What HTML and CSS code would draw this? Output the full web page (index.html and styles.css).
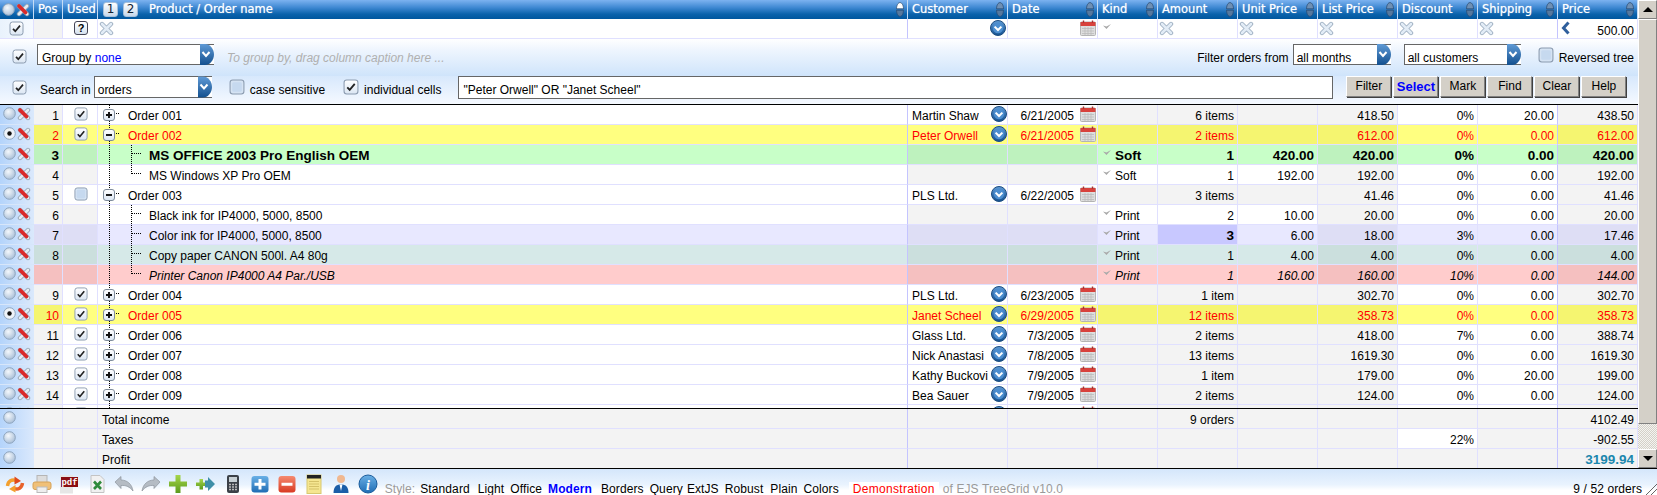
FILE: index.html
```html
<!DOCTYPE html>
<html lang="en">
<head>
<meta charset="utf-8">
<title>TreeGrid</title>
<link rel="stylesheet" href="styles.css">
</head>
<body>
<svg class="sprite" xmlns="http://www.w3.org/2000/svg">
  <defs>
    <radialGradient id="rg" cx=".4" cy=".35" r=".7"><stop offset="0" stop-color="#f4f8fc"/><stop offset="1" stop-color="#a7bdd6"/></radialGradient>
    <linearGradient id="cg" x1="0" y1="0" x2="0" y2="1"><stop offset="0" stop-color="#fff"/><stop offset="1" stop-color="#dbe6f3"/></linearGradient>
    <linearGradient id="bg" x1="0" y1="0" x2="0" y2="1"><stop offset="0" stop-color="#5f9ad6"/><stop offset="1" stop-color="#13508f"/></linearGradient>
    <linearGradient id="gg" x1="0" y1="0" x2="0" y2="1"><stop offset="0" stop-color="#a5d64a"/><stop offset="1" stop-color="#5c9a1c"/></linearGradient>
    <linearGradient id="rd" x1="0" y1="0" x2="0" y2="1"><stop offset="0" stop-color="#f58a70"/><stop offset="1" stop-color="#d93a22"/></linearGradient>
    <linearGradient id="pb" x1="0" y1="0" x2="0" y2="1"><stop offset="0" stop-color="#6ab0e6"/><stop offset="1" stop-color="#1f6db4"/></linearGradient>
  </defs>
  <symbol id="radio" viewBox="0 0 13 13"><circle cx="6.5" cy="6.5" r="5.8" fill="url(#rg)" stroke="#8ea4bc"/></symbol>
  <symbol id="radio-on" viewBox="0 0 13 13"><circle cx="6.5" cy="6.5" r="5.8" fill="#eef3f8" stroke="#8ea4bc"/><circle cx="6.5" cy="6.5" r="2.2" fill="#111"/></symbol>
  <symbol id="del" viewBox="0 0 14 14"><path d="M3 3 11 11M11 3 3 11" stroke="#97a6b6" stroke-width="4.4" stroke-linecap="round"/><path d="M3 3 11 11M11 3 3 11" stroke="#e4ebf2" stroke-width="2.6" stroke-linecap="round"/><path d="M3 3 9.500 9.500" stroke="#d92a2a" stroke-width="3.8" stroke-linecap="round"/></symbol>
  <symbol id="chk" viewBox="0 0 15 15"><rect x="1" y="1" width="13" height="13" rx="2.5" fill="url(#cg)" stroke="#8c9cb0"/><path d="M4 7.8 6.3 10.2 11 4.6" fill="none" stroke="#222" stroke-width="1.7"/></symbol>
  <symbol id="off" viewBox="0 0 15 15"><rect x="1" y="1" width="13" height="13" rx="2.5" fill="#d5e3f3" stroke="#8c9cb0"/><rect x="3" y="3" width="9" height="9" rx="1.5" fill="#c6d9ef"/></symbol>
  <symbol id="x" viewBox="0 0 15 15"><path d="M3 3 12 12M12 3 3 12" stroke="#9fb0c2" stroke-width="4.4" stroke-linecap="round"/><path d="M3 3 12 12M12 3 3 12" stroke="#e2ecf6" stroke-width="2.6" stroke-linecap="round"/></symbol>
  <symbol id="drop" viewBox="0 0 16 16"><circle cx="8" cy="8" r="7.5" fill="url(#bg)" stroke="#1d4d80"/><circle cx="8" cy="8" r="5.2" fill="#4d8ecf"/><path d="M4.6 6.6 8 10 11.4 6.6" fill="none" stroke="#fff" stroke-width="2"/></symbol>
  <symbol id="cal" viewBox="0 0 16 16"><rect x=".5" y="2" width="15" height="13.5" rx="1" fill="#dedede" stroke="#b4b4b4"/><rect x=".5" y="2" width="15" height="4" fill="#d8423c"/><path d="M3.5 .5V3M12.5 .5V3" stroke="#a33" stroke-width="1.4"/><path d="M2 8.5H14M2 11H14M2 13.5H14M5 7V15M8 7V15M11 7V15" stroke="#bbb" stroke-width=".8"/></symbol>
  <symbol id="kind" viewBox="0 0 10 8"><path d="M1 2.5 4.500 6 9 1 4.500 3.500Z" fill="#a9a9a9"/></symbol>
  <symbol id="plus" viewBox="0 0 12 12"><rect x=".5" y=".5" width="11" height="11" rx="2.5" fill="url(#cg)" stroke="#7f8c9c"/><path d="M3 6H9M6 3V9" stroke="#111" stroke-width="1.9"/></symbol>
  <symbol id="minus" viewBox="0 0 12 12"><rect x=".5" y=".5" width="11" height="11" rx="2.5" fill="url(#cg)" stroke="#7f8c9c"/><path d="M3 6H9" stroke="#111" stroke-width="1.9"/></symbol>
  <symbol id="sort" viewBox="0 0 8 15"><path d="M4 .6C6 .6 7.500 3.500 7.500 6.800H.5C.5 3.500 2 .6 4 .6Z" fill="#6f90b4" stroke="#2a4c74" stroke-width=".8"/><path d="M4 14.400C6 14.400 7.500 11.500 7.500 8.200H.5C.5 11.500 2 14.400 4 14.400Z" fill="#56799f" stroke="#2a4c74" stroke-width=".8"/></symbol>
  <symbol id="sort-up" viewBox="0 0 8 15"><path d="M4 .6C6 .6 7.500 3.500 7.500 6.800H.5C.5 3.500 2 .6 4 .6Z" fill="#fff" stroke="#2a4c74" stroke-width=".8"/><path d="M4 14.400C6 14.400 7.500 11.500 7.500 8.200H.5C.5 11.500 2 14.400 4 14.400Z" fill="#56799f" stroke="#2a4c74" stroke-width=".8"/></symbol>
  <symbol id="left" viewBox="0 0 10 14"><path d="M7.500 1.500 2.500 7 7.500 12.500" fill="none" stroke="#2f5f9c" stroke-width="3"/></symbol>
  <symbol id="dd" viewBox="0 0 14 21"><path d="M0 0H5C10 0 14 5 14 10.500S10 21 5 21H0Z" fill="url(#bg)"/><path d="M2.500 8 6 12 9.500 8" fill="none" stroke="#fff" stroke-width="2"/></symbol>
</svg>

<div class="sheet">
  <div class="main">
    <div class="row head">
      <div class="hc lead"><svg class="ic13"><use href="#radio"/></svg><svg class="ic14"><use href="#del"/></svg></div>
      <div class="hc">Pos</div>
      <div class="hc">Used</div>
      <div class="hc namehead"><span class="lvl">1</span><span class="lvl">2</span><span class="htext pt">Product / Order name</span><svg class="sort"><use href="#sort-up"/></svg></div>
      <div class="hc"><span class="htext">Customer</span><svg class="sort"><use href="#sort"/></svg></div>
      <div class="hc"><span class="htext">Date</span><svg class="sort"><use href="#sort"/></svg></div>
      <div class="hc"><span class="htext">Kind</span><svg class="sort"><use href="#sort"/></svg></div>
      <div class="hc"><span class="htext">Amount</span><svg class="sort"><use href="#sort"/></svg></div>
      <div class="hc"><span class="htext">Unit Price</span><svg class="sort"><use href="#sort"/></svg></div>
      <div class="hc"><span class="htext">List Price</span><svg class="sort"><use href="#sort"/></svg></div>
      <div class="hc"><span class="htext">Discount</span><svg class="sort"><use href="#sort"/></svg></div>
      <div class="hc"><span class="htext">Shipping</span><svg class="sort"><use href="#sort"/></svg></div>
      <div class="hc"><span class="htext">Price</span><svg class="sort"><use href="#sort"/></svg></div>
    </div>

    <div class="row">
      <div class="c fl-lead"><svg class="ic15"><use href="#chk"/></svg></div>
      <div class="c g"></div>
      <div class="c ctr"><span class="q">?</span></div>
      <div class="c fx sl"><svg class="ic15"><use href="#x"/></svg></div>
      <div class="c ico"><span class="grow"></span><svg class="ic16"><use href="#drop"/></svg></div>
      <div class="c ico"><span class="grow"></span><svg class="ic16"><use href="#cal"/></svg></div>
      <div class="c kind"><svg class="kd"><use href="#kind"/></svg></div>
      <div class="c fx"><svg class="ic15"><use href="#x"/></svg></div>
      <div class="c fx"><svg class="ic15"><use href="#x"/></svg></div>
      <div class="c fx"><svg class="ic15"><use href="#x"/></svg></div>
      <div class="c fx"><svg class="ic15"><use href="#x"/></svg></div>
      <div class="c fx sl"><svg class="ic15"><use href="#x"/></svg></div>
      <div class="c fx"><svg class="lf"><use href="#left"/></svg><span class="grow rt">500.00</span></div>
    </div>

    <div class="group">
      <svg class="ic15 pchk"><use href="#chk"/></svg>
      <div class="sel w-group"><span>Group by <b class="blue">none</b></span><svg class="ddb"><use href="#dd"/></svg></div>
      <span class="hint">To group by, drag column caption here ...</span>
      <span class="grow"></span>
      <span>Filter orders from</span>
      <div class="sel w-month"><span>all months</span><svg class="ddb"><use href="#dd"/></svg></div>
      <div class="sel w-cust"><span>all customers</span><svg class="ddb"><use href="#dd"/></svg></div>
      <svg class="ic16 rev"><use href="#off"/></svg>
      <span class="revt">Reversed tree</span>
    </div>

    <div class="search">
      <svg class="ic15 pchk"><use href="#chk"/></svg>
      <span class="sl-lab">Search in</span>
      <div class="sel w-search"><span>orders</span><svg class="ddb"><use href="#dd"/></svg></div>
      <svg class="ic16 cs"><use href="#off"/></svg>
      <span>case sensitive</span>
      <svg class="ic16 ind"><use href="#chk"/></svg>
      <span>individual cells</span>
      <div class="query">"Peter Orwell" OR "Janet Scheel"</div>
      <div class="btns">
        <b class="btn">Filter</b><b class="btn sel-b">Select</b><b class="btn">Mark</b><b class="btn">Find</b><b class="btn">Clear</b><b class="btn">Help</b>
      </div>
    </div>

    <div class="body">
      <div class="row">
        <div class="c lp"><svg class="ic13"><use href="#radio"/></svg><svg class="ic14"><use href="#del"/></svg></div>
        <div class="c g">1</div><div class="c ctr"><svg class="ic13"><use href="#chk"/></svg></div>
        <div class="c nm sl"><svg class="node"><use href="#plus"/></svg><i class="h oh"></i><span class="ot">Order 001</span></div>
        <div class="c cu"><span class="grow">Martin Shaw</span><svg class="ic16"><use href="#drop"/></svg></div>
        <div class="c da"><span class="grow">6/21/2005</span><svg class="ic16"><use href="#cal"/></svg></div>
        <div class="c g"></div><div class="c g">6 items</div><div class="c g"></div><div class="c g">418.50</div><div class="c">0%</div><div class="c sl">20.00</div><div class="c g">438.50</div>
      </div>
      <div class="row yellow">
        <div class="c lp"><svg class="ic13"><use href="#radio-on"/></svg><svg class="ic14"><use href="#del"/></svg></div>
        <div class="c g">2</div><div class="c ctr"><svg class="ic13"><use href="#chk"/></svg></div>
        <div class="c nm sl"><svg class="node"><use href="#minus"/></svg><i class="h oh"></i><span class="ot">Order 002</span></div>
        <div class="c cu"><span class="grow">Peter Orwell</span><svg class="ic16"><use href="#drop"/></svg></div>
        <div class="c da"><span class="grow">6/21/2005</span><svg class="ic16"><use href="#cal"/></svg></div>
        <div class="c g"></div><div class="c g">2 items</div><div class="c g"></div><div class="c g">612.00</div><div class="c">0%</div><div class="c sl">0.00</div><div class="c g">612.00</div>
      </div>
      <div class="row green bold">
        <div class="c lp"><svg class="ic13"><use href="#radio"/></svg><svg class="ic14"><use href="#del"/></svg></div>
        <div class="c g">3</div><div class="c g"></div>
        <div class="c nm sl"><i class="v"></i><i class="h ch"></i><span class="ct">MS OFFICE 2003 Pro English OEM</span></div>
        <div class="c g"></div><div class="c g"></div>
        <div class="c kind"><svg class="kd"><use href="#kind"/></svg><span>Soft</span></div>
        <div class="c">1</div><div class="c">420.00</div><div class="c g">420.00</div><div class="c">0%</div><div class="c sl">0.00</div><div class="c g">420.00</div>
      </div>
      <div class="row">
        <div class="c lp"><svg class="ic13"><use href="#radio"/></svg><svg class="ic14"><use href="#del"/></svg></div>
        <div class="c g">4</div><div class="c g"></div>
        <div class="c nm sl"><i class="v last"></i><i class="h ch"></i><span class="ct">MS Windows XP Pro OEM</span></div>
        <div class="c g"></div><div class="c g"></div>
        <div class="c kind"><svg class="kd"><use href="#kind"/></svg><span>Soft</span></div>
        <div class="c">1</div><div class="c">192.00</div><div class="c g">192.00</div><div class="c">0%</div><div class="c sl">0.00</div><div class="c g">192.00</div>
      </div>
      <div class="row">
        <div class="c lp"><svg class="ic13"><use href="#radio"/></svg><svg class="ic14"><use href="#del"/></svg></div>
        <div class="c g">5</div><div class="c ctr"><svg class="ic13"><use href="#off"/></svg></div>
        <div class="c nm sl"><svg class="node"><use href="#minus"/></svg><i class="h oh"></i><span class="ot">Order 003</span></div>
        <div class="c cu"><span class="grow">PLS Ltd.</span><svg class="ic16"><use href="#drop"/></svg></div>
        <div class="c da"><span class="grow">6/22/2005</span><svg class="ic16"><use href="#cal"/></svg></div>
        <div class="c g"></div><div class="c g">3 items</div><div class="c g"></div><div class="c g">41.46</div><div class="c">0%</div><div class="c sl">0.00</div><div class="c g">41.46</div>
      </div>
      <div class="row">
        <div class="c lp"><svg class="ic13"><use href="#radio"/></svg><svg class="ic14"><use href="#del"/></svg></div>
        <div class="c g">6</div><div class="c g"></div>
        <div class="c nm sl"><i class="v"></i><i class="h ch"></i><span class="ct">Black ink for IP4000, 5000, 8500</span></div>
        <div class="c g"></div><div class="c g"></div>
        <div class="c kind"><svg class="kd"><use href="#kind"/></svg><span>Print</span></div>
        <div class="c">2</div><div class="c">10.00</div><div class="c g">20.00</div><div class="c">0%</div><div class="c sl">0.00</div><div class="c g">20.00</div>
      </div>
      <div class="row lilac">
        <div class="c lp"><svg class="ic13"><use href="#radio"/></svg><svg class="ic14"><use href="#del"/></svg></div>
        <div class="c g">7</div><div class="c g"></div>
        <div class="c nm sl"><i class="v"></i><i class="h ch"></i><span class="ct">Color ink for IP4000, 5000, 8500</span></div>
        <div class="c g"></div><div class="c g"></div>
        <div class="c kind"><svg class="kd"><use href="#kind"/></svg><span>Print</span></div>
        <div class="c focus">3</div><div class="c">6.00</div><div class="c g">18.00</div><div class="c">3%</div><div class="c sl">0.00</div><div class="c g">17.46</div>
      </div>
      <div class="row teal">
        <div class="c lp"><svg class="ic13"><use href="#radio"/></svg><svg class="ic14"><use href="#del"/></svg></div>
        <div class="c g">8</div><div class="c g"></div>
        <div class="c nm sl"><i class="v"></i><i class="h ch"></i><span class="ct">Copy paper CANON 500l. A4 80g</span></div>
        <div class="c g"></div><div class="c g"></div>
        <div class="c kind"><svg class="kd"><use href="#kind"/></svg><span>Print</span></div>
        <div class="c">1</div><div class="c">4.00</div><div class="c g">4.00</div><div class="c">0%</div><div class="c sl">0.00</div><div class="c g">4.00</div>
      </div>
      <div class="row pink">
        <div class="c lp"><svg class="ic13"><use href="#radio"/></svg><svg class="ic14"><use href="#del"/></svg></div>
        <div class="c g"></div><div class="c g"></div>
        <div class="c nm sl"><i class="v last"></i><i class="h ch"></i><span class="ct">Printer Canon IP4000 A4 Par./USB</span></div>
        <div class="c g"></div><div class="c g"></div>
        <div class="c kind"><svg class="kd"><use href="#kind"/></svg><span>Print</span></div>
        <div class="c">1</div><div class="c">160.00</div><div class="c g">160.00</div><div class="c">10%</div><div class="c sl">0.00</div><div class="c g">144.00</div>
      </div>
      <div class="row">
        <div class="c lp"><svg class="ic13"><use href="#radio"/></svg><svg class="ic14"><use href="#del"/></svg></div>
        <div class="c g">9</div><div class="c ctr"><svg class="ic13"><use href="#chk"/></svg></div>
        <div class="c nm sl"><svg class="node"><use href="#plus"/></svg><i class="h oh"></i><span class="ot">Order 004</span></div>
        <div class="c cu"><span class="grow">PLS Ltd.</span><svg class="ic16"><use href="#drop"/></svg></div>
        <div class="c da"><span class="grow">6/23/2005</span><svg class="ic16"><use href="#cal"/></svg></div>
        <div class="c g"></div><div class="c g">1 item</div><div class="c g"></div><div class="c g">302.70</div><div class="c">0%</div><div class="c sl">0.00</div><div class="c g">302.70</div>
      </div>
      <div class="row yellow">
        <div class="c lp"><svg class="ic13"><use href="#radio-on"/></svg><svg class="ic14"><use href="#del"/></svg></div>
        <div class="c g">10</div><div class="c ctr"><svg class="ic13"><use href="#chk"/></svg></div>
        <div class="c nm sl"><svg class="node"><use href="#plus"/></svg><i class="h oh"></i><span class="ot">Order 005</span></div>
        <div class="c cu"><span class="grow">Janet Scheel</span><svg class="ic16"><use href="#drop"/></svg></div>
        <div class="c da"><span class="grow">6/29/2005</span><svg class="ic16"><use href="#cal"/></svg></div>
        <div class="c g"></div><div class="c g">12 items</div><div class="c g"></div><div class="c g">358.73</div><div class="c">0%</div><div class="c sl">0.00</div><div class="c g">358.73</div>
      </div>
      <div class="row">
        <div class="c lp"><svg class="ic13"><use href="#radio"/></svg><svg class="ic14"><use href="#del"/></svg></div>
        <div class="c g">11</div><div class="c ctr"><svg class="ic13"><use href="#chk"/></svg></div>
        <div class="c nm sl"><svg class="node"><use href="#plus"/></svg><i class="h oh"></i><span class="ot">Order 006</span></div>
        <div class="c cu"><span class="grow">Glass Ltd.</span><svg class="ic16"><use href="#drop"/></svg></div>
        <div class="c da"><span class="grow">7/3/2005</span><svg class="ic16"><use href="#cal"/></svg></div>
        <div class="c g"></div><div class="c g">2 items</div><div class="c g"></div><div class="c g">418.00</div><div class="c">7%</div><div class="c sl">0.00</div><div class="c g">388.74</div>
      </div>
      <div class="row">
        <div class="c lp"><svg class="ic13"><use href="#radio"/></svg><svg class="ic14"><use href="#del"/></svg></div>
        <div class="c g">12</div><div class="c ctr"><svg class="ic13"><use href="#chk"/></svg></div>
        <div class="c nm sl"><svg class="node"><use href="#plus"/></svg><i class="h oh"></i><span class="ot">Order 007</span></div>
        <div class="c cu"><span class="grow">Nick Anastasi</span><svg class="ic16"><use href="#drop"/></svg></div>
        <div class="c da"><span class="grow">7/8/2005</span><svg class="ic16"><use href="#cal"/></svg></div>
        <div class="c g"></div><div class="c g">13 items</div><div class="c g"></div><div class="c g">1619.30</div><div class="c">0%</div><div class="c sl">0.00</div><div class="c g">1619.30</div>
      </div>
      <div class="row">
        <div class="c lp"><svg class="ic13"><use href="#radio"/></svg><svg class="ic14"><use href="#del"/></svg></div>
        <div class="c g">13</div><div class="c ctr"><svg class="ic13"><use href="#chk"/></svg></div>
        <div class="c nm sl"><svg class="node"><use href="#plus"/></svg><i class="h oh"></i><span class="ot">Order 008</span></div>
        <div class="c cu"><span class="grow">Kathy Buckovi</span><svg class="ic16"><use href="#drop"/></svg></div>
        <div class="c da"><span class="grow">7/9/2005</span><svg class="ic16"><use href="#cal"/></svg></div>
        <div class="c g"></div><div class="c g">1 item</div><div class="c g"></div><div class="c g">179.00</div><div class="c">0%</div><div class="c sl">20.00</div><div class="c g">199.00</div>
      </div>
      <div class="row">
        <div class="c lp"><svg class="ic13"><use href="#radio"/></svg><svg class="ic14"><use href="#del"/></svg></div>
        <div class="c g">14</div><div class="c ctr"><svg class="ic13"><use href="#chk"/></svg></div>
        <div class="c nm sl"><svg class="node"><use href="#plus"/></svg><i class="h oh"></i><span class="ot">Order 009</span></div>
        <div class="c cu"><span class="grow">Bea Sauer</span><svg class="ic16"><use href="#drop"/></svg></div>
        <div class="c da"><span class="grow">7/9/2005</span><svg class="ic16"><use href="#cal"/></svg></div>
        <div class="c g"></div><div class="c g">2 items</div><div class="c g"></div><div class="c g">124.00</div><div class="c">0%</div><div class="c sl">0.00</div><div class="c g">124.00</div>
      </div>
      <div class="row">
        <div class="c lp"><svg class="ic13"><use href="#radio"/></svg><svg class="ic14"><use href="#del"/></svg></div>
        <div class="c g"></div><div class="c ctr"><svg class="ic13"><use href="#chk"/></svg></div>
        <div class="c nm sl"><svg class="node"><use href="#plus"/></svg></div>
        <div class="c cu"><span class="grow"></span><svg class="ic16"><use href="#drop"/></svg></div>
        <div class="c da"><span class="grow"></span><svg class="ic16"><use href="#cal"/></svg></div>
        <div class="c g"></div><div class="c g"></div><div class="c g"></div><div class="c g"></div><div class="c"></div><div class="c sl"></div><div class="c g"></div>
      </div>
    </div>

    <div class="foot">
      <div class="row fr">
        <div class="c lp"><svg class="ic13"><use href="#radio"/></svg></div>
        <div class="c g"></div><div class="c g"></div><div class="c g lab sl">Total income</div><div class="c g"></div><div class="c g"></div><div class="c g"></div>
        <div class="c g">9 orders</div><div class="c g"></div><div class="c g"></div><div class="c g"></div><div class="c g sl"></div><div class="c g">4102.49</div>
      </div>
      <div class="row fr">
        <div class="c lp"><svg class="ic13"><use href="#radio"/></svg></div>
        <div class="c g"></div><div class="c g"></div><div class="c g lab sl">Taxes</div><div class="c g"></div><div class="c g"></div><div class="c g"></div>
        <div class="c g"></div><div class="c g"></div><div class="c g"></div><div class="c">22%</div><div class="c g sl"></div><div class="c g">-902.55</div>
      </div>
      <div class="row fr short">
        <div class="c lp"><svg class="ic13"><use href="#radio"/></svg></div>
        <div class="c g"></div><div class="c g"></div><div class="c g lab sl">Profit</div><div class="c g"></div><div class="c g"></div><div class="c g"></div>
        <div class="c g"></div><div class="c g"></div><div class="c g"></div><div class="c g"></div><div class="c g sl"></div><div class="c g profit">3199.94</div>
      </div>
    </div>
  </div>

  <div class="scroll">
    <div class="sb-btn"><span class="tri-up"></span></div>
    <div class="sb-thumb"></div>
    <div class="sb-track"></div>
    <div class="sb-btn"><span class="tri-down"></span></div>
  </div>
</div>

<div class="tools">
  <svg class="tb" viewBox="0 0 20 20"><path d="M2.500 12C3 7 7 5 11 6.500" fill="none" stroke="#f3a02e" stroke-width="3.400"/><path d="M9.500 2.500 16 7 9.500 10.500Z" fill="#df4a1e"/><path d="M17.500 9C17 14 13 16 9 14.500" fill="none" stroke="#e8622a" stroke-width="3.400"/><path d="M10.500 11 4 15 10.500 18.500Z" fill="#f3a02e"/></svg>
  <svg class="tb" viewBox="0 0 20 20"><rect x="5" y="1.500" width="10" height="7" fill="#ddd" stroke="#b5b5b5"/><rect x="1" y="8" width="18" height="7.500" rx="2" fill="#f0c078" stroke="#d6a258"/><rect x="5" y="13" width="10" height="5.500" fill="#eee" stroke="#bbb"/></svg>
  <svg class="tb" viewBox="0 0 20 20"><rect x="1" y="1" width="13" height="18.500" fill="#e6e6e6"/><rect x="2" y="3" width="17" height="10" fill="#8a0d12"/><text x="10.500" y="11" class="pdf">pdf</text></svg>
  <svg class="tb" viewBox="0 0 20 20"><path d="M4 1.500H13L17 5.500V18.500H4Z" fill="#f1f1f1" stroke="#c4c4c4"/><path d="M7 7.500 14 15M14 7.500 7 15" stroke="#2f8a3a" stroke-width="2.600"/></svg>
  <svg class="tb" viewBox="0 0 20 20"><path d="M1 8 7 2.500V6C13 6 18 10 19 17 16 13 12 11 7 11.500V14.500Z" fill="#b5bcc4" stroke="#8c949c" stroke-width=".7"/></svg>
  <svg class="tb" viewBox="0 0 20 20"><path d="M19 8 13 2.500V6C7 6 2 10 1 17 4 13 8 11 13 11.500V14.500Z" fill="#b5bcc4" stroke="#8c949c" stroke-width=".7"/></svg>
  <svg class="tb" viewBox="0 0 20 20"><path d="M7.500 1H12.500V7.500H19V12.500H12.500V19H7.500V12.500H1V7.500H7.500Z" fill="url(#gg)"/></svg>
  <svg class="tb" viewBox="0 0 20 20"><path d="M4.500 5H8V8.500H11V12H8V15.500H4.500V12H1V8.500H4.500Z" fill="url(#gg)"/><path d="M10 6.500H13V3L20 10 13 17V13.500H10Z" fill="#3f8fa8"/></svg>
  <svg class="tb" viewBox="0 0 20 20"><rect x="4" y="1" width="12" height="18" rx="2" fill="#3c4148"/><rect x="6" y="3" width="8" height="5" fill="#c8d0d4"/><path d="M6 10.500H14M6 13H14M6 15.500H14" stroke="#bbb" stroke-width="1.300" stroke-dasharray="2 1"/></svg>
  <svg class="tb" viewBox="0 0 20 20"><rect x="1.500" y="2" width="17" height="16.500" rx="3" fill="url(#pb)"/><path d="M4.500 10.250H15.500M10 5V15.500" stroke="#fff" stroke-width="3"/></svg>
  <svg class="tb" viewBox="0 0 20 20"><rect x="1.500" y="2" width="17" height="16.500" rx="3" fill="url(#rd)"/><path d="M4.500 10.250H15.500" stroke="#fff" stroke-width="3"/></svg>
  <svg class="tb" viewBox="0 0 20 20"><rect x="3" y="1" width="14" height="18.500" fill="#f5e690" stroke="#d8c870"/><rect x="3" y="1" width="14" height="3.500" fill="#222"/><path d="M5 7.500H15M5 10H15M5 12.500H15M5 15H15" stroke="#cdb960" stroke-width=".8"/></svg>
  <svg class="tb" viewBox="0 0 20 20"><circle cx="10" cy="5" r="4" fill="#f0b890"/><path d="M2.500 19C2.500 13 5 10.500 10 10.500S17.500 13 17.500 19Z" fill="#1b5ea8"/><path d="M8.500 10.500H11.500L10 17Z" fill="#fff"/></svg>
  <svg class="tb" viewBox="0 0 20 20"><circle cx="10" cy="10" r="9" fill="url(#pb)" stroke="#1a5c9c"/><text x="10" y="15.500" class="inf">i</text></svg>
  <span class="tx st">Style:</span>
  <span class="tx s-std">Standard</span><span class="tx">Light</span><span class="tx">Office</span><span class="tx mod">Modern</span><span class="tx">Borders</span><span class="tx s-query">Query</span><span class="tx">ExtJS</span><span class="tx s-rob">Robust</span><span class="tx">Plain</span><span class="tx">Colors</span>
  <span class="tx demo">Demonstration</span>
  <span class="tx st ofe">of EJS TreeGrid v10.0</span>
  <span class="grow"></span>
  <span class="tx stat">9 / 52 orders</span>
  <svg class="grip" viewBox="0 0 12 12"><path d="M1 12 12 1M6 12 12 6" stroke="#666" fill="none"/></svg>
</div>
</body>
</html>
```

FILE: styles.css
```css
html, body {
  margin: 0;
  padding: 0;
  height: 495px;
  overflow: hidden;
  background: #fff;
  font: 12px/14px "Liberation Sans", Arial, sans-serif;
  color: #000;
}
.sprite { display: block; width: 0; height: 0; overflow: hidden; }
.grow { flex: 1 1 auto; min-width: 0; overflow: hidden; }
.rt { text-align: right; }
.blue { color: #00f; font-weight: normal; }

.sheet {
  display: flex;
  width: 1657px;
  height: 469px;
  box-sizing: border-box;
  border-bottom: 1px solid #000;
}
.main { width: 1638px; display: flex; flex-direction: column; }

.row {
  display: grid;
  grid-template-columns: 34px 29px 35px 810px 100px 90px 60px 80px 80px 80px 80px 80px 80px;
  height: 20px;
  --bg: #fff;
  --alt: #f3f3f3;
}
.c {
  box-sizing: border-box;
  height: 20px;
  padding: 0 3px 0 2px;
  border-right: 1px solid #e0e0ff;
  border-bottom: 1px solid #e0e0ff;
  background-color: var(--bg);
  line-height: 22px;
  text-align: right;
  white-space: nowrap;
  overflow: hidden;
}
.g { background-color: var(--alt); }
.sl { border-right-color: #c4c4ff; }
.yellow { --bg: #ffff80; --alt: #f5f570; color: #f00; }
.green { --bg: #c8ffc8; --alt: #bef2be; }
.lilac { --bg: #e8e8ff; --alt: #dedef5; }
.teal { --bg: #d6e9e8; --alt: #cbdfdd; }
.pink { --bg: #ffcccc; --alt: #f5c0c0; font-style: italic; }
.bold .c { font-weight: bold; font-size: 13.5px; }
.focus { background-color: #c8c8ff; font-weight: bold; font-size: 13.5px; }

/* header */
.head { height: 19px; background: linear-gradient(#7cb2f0 0, #3e88d2 40%, #0a62ab 75%, #00569e 100%); }
.hc {
  display: flex;
  align-items: center;
  box-sizing: border-box;
  padding: 0 3px 1px 4px;
  border-right: 1px solid #c5dcf5;
  color: #fff;
  font: 11.5px/18px "DejaVu Sans", sans-serif;
  text-shadow: 0 0 1px rgba(255, 255, 255, .7);
  white-space: nowrap;
}
.htext { flex: 1 1 auto; }
.pt { margin-left: 6px; }
.lead { padding: 0 0 0 2px; gap: 1px; }
.sort { width: 8px; height: 15px; flex: none; }
.lvl {
  box-sizing: border-box;
  width: 15px;
  height: 15px;
  margin-right: 5px;
  border: 1px solid #a6c0dc;
  border-radius: 3px;
  background: linear-gradient(#fff, #c7d8ea);
  color: #123;
  font: 12px/13px "DejaVu Sans", sans-serif;
  text-shadow: none;
  text-align: center;
}
.namehead { padding-left: 5px; }

/* icons */
svg { flex: none; }
.ic13 { width: 13px; height: 13px; }
.ic14 { width: 14px; height: 14px; }
.ic15 { width: 15px; height: 15px; }
.ic16 { width: 16px; height: 16px; }

/* filter row */
.fl-lead { background: linear-gradient(90deg, #e9f2fc, #f6faff); text-align: center; padding: 2px 0 0 0; }
.ctr { display: flex; justify-content: center; padding: 2px 0 0 2px; }
.ctr .ic13 { width: 14px; height: 14px; }
.fx { display: flex; align-items: flex-start; padding: 2px 3px 0 0; }
.fx .rt { line-height: 20px; }
.fx .ic15 { margin-left: 1px; }
.lf { width: 10px; height: 14px; margin-left: 3px; }
.ico { display: flex; padding: 1px 1px 0 2px; }
.q {
  box-sizing: border-box;
  width: 14px;
  height: 14px;
  border: 1px solid #445;
  border-radius: 3px;
  background: linear-gradient(#fff, #d6e2ef);
  font: bold 11px/12px "Liberation Sans", sans-serif;
  text-align: center;
}

/* panels */
.group, .search { display: flex; align-items: center; box-sizing: border-box; }
.group > span, .search > span { padding-top: 6px; }
.group > .grow { padding-top: 0; }
.group {
  height: 37px;
  padding: 5px 4px 11px 12px;
  background: linear-gradient(#fff 0, #eef5fe 30%, #cfe4fb 100%);
}
.group .pchk { margin-top: 3px; }
.search {
  height: 29px;
  padding: 0 0 6px 12px;
  border-bottom: 1px solid #000;
  background: linear-gradient(#d7e8fc, #f5f9ff);
}
.pchk { margin-right: 10px; margin-left: 0; }
.sel {
  display: flex;
  align-items: center;
  box-sizing: border-box;
  height: 21px;
  padding-left: 3px;
  border: 1px solid #666;
  border-right: 0;
  background: #fff;
}
.sel > span { flex: 1 1 auto; padding-top: 6px; }
.ddb { width: 14px; height: 21px; margin: -1px 0; }
.w-group { width: 177px; margin-right: 13px; padding-left: 4px; }
.hint { color: #b0b0b0; font-style: italic; }
.w-month { width: 98px; margin: 0 13px 0 4px; }
.w-cust { width: 117px; }
.rev { margin: 0 5px 0 17px; width: 16px; height: 16px; }
.sl-lab { margin: 0 3px 0 3px; }
.w-search { width: 118px; height: 22px; }
.w-search .ddb { height: 22px; }
.cs { margin: 0 5px 0 17px; }
.ind { margin: 0 5px 0 18px; }
.query {
  box-sizing: border-box;
  width: 875px;
  height: 23px;
  margin-left: 17px;
  padding: 6px 4px 0;
  border: 1px solid #666;
  background: #fff;
}
.btns { display: flex; gap: 2px; margin-left: 13px; align-self: flex-start; }
.btn {
  box-sizing: border-box;
  width: 45px;
  height: 21px;
  border: 1px solid;
  border-color: #fff #808080 #808080 #fff;
  box-shadow: 1px 1px 0 #404040;
  background: #d4d0c8;
  font-weight: normal;
  line-height: 19px;
  text-align: center;
}
.sel-b { color: #00f; font-weight: bold; font-size: 13px; }

/* body */
.body { height: 304px; overflow: hidden; border-bottom: 1px solid #000; box-sizing: border-box; }
.lp {
  display: flex;
  align-items: flex-start;
  gap: 1px;
  padding: 2px 0 0 3px;
  border-right: 0;
  border-bottom-color: #d7e6fa;
  background: linear-gradient(90deg, #b4d4fb, #dbe9fc);
}
.nm {
  display: flex;
  align-items: flex-start;
  padding: 0;
  text-align: left;
  background-image: linear-gradient(#000 50%, transparent 50%);
  background-size: 1px 2px;
  background-position: 11px 0;
  background-repeat: repeat-y;
}
.node { width: 12px; height: 12px; margin: 4px 0 0 5px; }
.h {
  display: block;
  height: 1px;
  margin-top: 8px;
  background-image: linear-gradient(90deg, #000 50%, transparent 50%);
  background-size: 2px 1px;
}
.oh { width: 4px; margin-left: 1px; }
.ot { margin-left: 8px; }
.v {
  display: block;
  width: 1px;
  height: 20px;
  margin-left: 33px;
  background-image: linear-gradient(#000 50%, transparent 50%);
  background-size: 1px 2px;
}
.v.last { height: 9px; }
.ch { width: 9px; }
.ct { margin-left: 8px; }
.cu, .da { display: flex; padding: 1px 0 0 4px; text-align: left; }
.cu .grow, .da .grow { line-height: 22px; margin-top: -1px; }
.da { padding-right: 1px; }
.da .grow { text-align: right; margin-right: 6px; }
.kind { display: flex; align-items: flex-start; padding: 0 0 0 4px; text-align: left; }
.kd { width: 10px; height: 8px; margin: 4px 3px 0 0; }

/* footer */
.foot { height: 59px; }
.lab { text-align: left; padding-left: 4px; }
.short, .short .c { height: 19px; }
.short .c { border-bottom: 0; }
.profit { color: #1b87ad; font-weight: bold; font-size: 13.5px; }

/* scrollbar */
.scroll { width: 19px; display: flex; flex-direction: column; }
.sb-btn, .sb-thumb {
  box-sizing: border-box;
  border: 1px solid;
  border-color: #fff #808080 #808080 #fff;
  background: #d4d0c8;
}
.sb-btn { height: 19px; display: flex; align-items: center; justify-content: center; }
.sb-thumb { height: 405px; }
.sb-track {
  flex: 1 1 auto;
  background: repeating-conic-gradient(#d4d0c8 0 25%, #f4f4f0 0 50%) 0 0 / 2px 2px;
}
.tri-up, .tri-down { width: 0; height: 0; border-left: 5px solid transparent; border-right: 5px solid transparent; }
.tri-up { border-bottom: 5px solid #000; }
.tri-down { border-top: 5px solid #000; }

/* toolbar */
.tools {
  display: flex;
  align-items: flex-start;
  height: 26px;
  padding: 0 0 0 1px;
  box-sizing: border-box;
  background: linear-gradient(#d4e6fb 0, #e9f3fe 60%, #fff 82%);
  overflow: hidden;
}
.tb { width: 20px; height: 20px; margin: 5px 3.2px 0 4px; }
.tx { margin: 13px 6px 0 0; line-height: 14px; white-space: nowrap; letter-spacing: .1px; }
.st { color: #9a9a9a; margin-left: 3px; margin-right: 5px; }
.s-std { margin-right: 8px; }
.mod { color: #00f; font-weight: bold; margin-right: 9px; }
.s-query { margin-right: 4px; }
.s-rob { margin-right: 7px; }
.demo { color: #f00; background: #fff; padding: 0 4px; margin-left: 4px; margin-right: 0; letter-spacing: .3px; }
.ofe { margin-left: 4px; }
.stat { margin-right: 3px; }
.grip { width: 12px; height: 12px; margin-top: 14px; }
.pdf { font: bold 9px "Liberation Mono", monospace; fill: #fff; text-anchor: middle; }
.inf { font: italic bold 14px "Liberation Serif", serif; fill: #fff; text-anchor: middle; }
```
